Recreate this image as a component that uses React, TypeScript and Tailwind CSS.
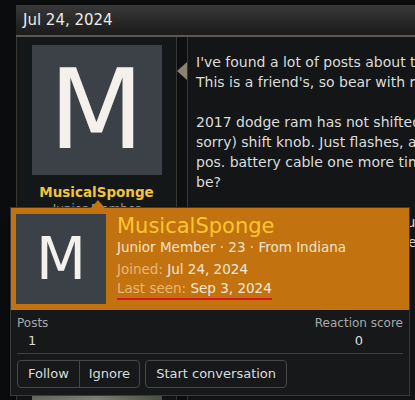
import React from 'react'

const font = { fontFamily: '"DejaVu Sans", Verdana, sans-serif' }

function MessageLines({ lines }: { lines: string[] }) {
  return (
    <div className="whitespace-nowrap text-[14px] leading-[20px] text-[#dcdcdc]">
      {lines.map((l, i) => (
        <div key={i} className="h-[20px]">
          {l}
        </div>
      ))}
    </div>
  )
}

function UserPopup() {
  return (
    <div className="absolute left-[10px] top-[207px] w-[400px] border border-[#3a3a3a] bg-[#16181a] shadow-lg">
      {/* arrow */}
      <div className="absolute left-[80px] top-[-8px] h-0 w-0 border-x-[7px] border-b-[8px] border-x-transparent border-b-[#c2720f]" />
      <div className="flex bg-[#c2720f] px-[5px] pt-[6px] pb-[6px]">
        <div className="flex h-[90px] w-[90px] shrink-0 items-center justify-center bg-[#3b4147] text-[58px] leading-none text-[#f4f1ec]">
          M
        </div>
        <div className="ml-[11px] flex flex-col">
          <div className="text-[21px] leading-[24px] text-[#fcc72e]">MusicalSponge</div>
          <div className="text-[13.5px] leading-[18px] text-[#f5e4cb]">Junior Member · 23 · From Indiana</div>
          <div className="mt-[3px] text-[13.5px] leading-[20px]">
            <span className="text-[#e9b774]">Joined:</span>{' '}
            <span className="text-[#f7ead8]">Jul 24, 2024</span>
          </div>
          <div className="w-fit border-b-2 border-[#e0141c] text-[13.5px] leading-[19px]">
            <span className="text-[#e9b774]">Last seen:</span>{' '}
            <span className="text-[#f7ead8]">Sep 3, 2024</span>
          </div>
        </div>
      </div>
      <div className="px-[6px] pt-[5px]">
        <div className="flex justify-between text-[12px] text-[#a9a9a9]">
          <div className="flex flex-col">
            <span className="leading-[17px]">Posts</span>
            <span className="ml-[11px] text-[13px] leading-[17px] text-[#dcdcdc]">1</span>
          </div>
          <div className="flex flex-col items-end">
            <span className="leading-[17px]">Reaction score</span>
            <span className="mr-[40px] text-[13px] leading-[17px] text-[#dcdcdc]">0</span>
          </div>
        </div>
        <div className="mt-[4px] border-t border-[#3e3e3e]" />
        <div className="flex gap-[5px] pt-[6px] pb-[7px] text-[13px] text-[#dcdcdc]">
          <div className="flex h-[28px] rounded-[4px] border border-[#474747]">
            <span className="flex items-center border-r border-[#474747] px-[10px]">Follow</span>
            <span className="flex items-center px-[9px]">Ignore</span>
          </div>
          <span className="flex h-[28px] items-center rounded-[4px] border border-[#474747] px-[10px]">
            Start conversation
          </span>
        </div>
      </div>
    </div>
  )
}

export default function App() {
  return (
    <div className="relative h-[400px] w-[415px] overflow-hidden bg-[#0b0c0d]" style={font}>
      <div className="ml-4 mt-[5px] bg-[#131516]">
        <div className="flex h-[30px] items-center bg-gradient-to-b from-[#393939] to-[#1b1b1b] pl-[7px] text-[15px] text-[#ecebe8]">
          Jul 24, 2024
        </div>
        <div className="flex border-t-2 border-[#5d5852]">
          <div className="flex w-[161px] shrink-0 flex-col items-center border-x border-[#3a3835] bg-[#141718] pt-[8px]">
            <div className="flex h-[130px] w-[130px] items-center justify-center bg-[#3b4147] text-[110px] leading-none text-[#f4f1ec]">
              M
            </div>
            <div className="mt-[8px] text-[13.5px] font-bold leading-[18px] text-[#f0c43c]">MusicalSponge</div>
            <div className="text-[12px] leading-[16px] text-[#9a9a9a]">Junior Member</div>
            <div className="h-[170px]" />
            <div className="h-[40px] w-[130px] bg-gradient-to-r from-[#6d7563] via-[#8a8d7c] to-[#50584c]" />
          </div>
          <div className="w-[10px] shrink-0 bg-[#0e0f10]" />
          <div className="relative flex-1 border-l border-[#3a3835] bg-[#131516] pl-[8px] pt-[15px]">
            <div className="absolute left-[-11px] top-[25px] h-0 w-0 border-y-[9px] border-r-[10px] border-y-transparent border-r-[#8b8272]" />
            <MessageLines
              lines={[
                "I've found a lot of posts about this issue, but none quite like mine.",
                "This is a friend's, so bear with me on the details.",
                '',
                '2017 dodge ram has not shifted out of park with the (dial, not',
                'sorry) shift knob. Just flashes, and nothing happens. Pulled the',
                'pos. battery cable one more time and waited. What could it',
                'be?',
                '',
                'It sounds like it wants to go, but no luck with the knob itself',
                'so I thought maybe the module was bad or needed a reset.',
                '',
                '',
                '',
                '',
                '',
                '',
                '',
                '',
                'shapes the transmission, would that be the cause?',
              ]}
            />
          </div>
        </div>
      </div>
      <UserPopup />
    </div>
  )
}
